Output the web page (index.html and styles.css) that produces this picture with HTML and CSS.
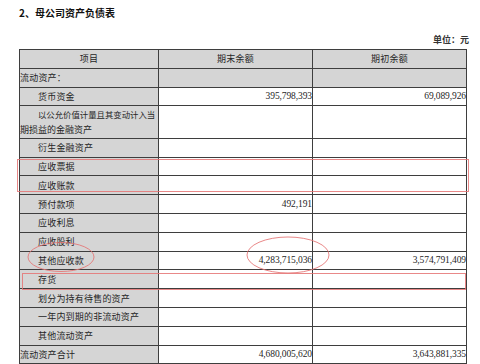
FILE: index.html
```html
<!DOCTYPE html>
<html lang="zh-CN">
<head>
<meta charset="utf-8">
<title>母公司资产负债表</title>
<link rel="stylesheet" href="styles.css">
</head>
<body>
<div class="page">
  <h1 class="title">2、母公司资产负债表</h1>
  <div class="unit">单位：元</div>
  <table class="sheet">
    <colgroup><col class="c1"><col class="c2"><col class="c3"></colgroup>
    <tr class="head"><td class="center">项目</td><td class="center">期末余额</td><td class="center">期初余额</td></tr>
    <tr class="group"><td>流动资产：</td><td></td><td></td></tr>
    <tr><td class="ind">货币资金</td><td class="num">395,798,393</td><td class="num">69,089,926</td></tr>
    <tr class="tall"><td class="wrap"><span class="l1">以公允价值计量且其变动计入当</span><br>期损益的金融资产</td><td></td><td></td></tr>
    <tr><td class="ind">衍生金融资产</td><td></td><td></td></tr>
    <tr><td class="ind">应收票据</td><td></td><td></td></tr>
    <tr><td class="ind">应收账款</td><td></td><td></td></tr>
    <tr><td class="ind">预付款项</td><td class="num">492,191</td><td></td></tr>
    <tr><td class="ind">应收利息</td><td></td><td></td></tr>
    <tr><td class="ind">应收股利</td><td></td><td></td></tr>
    <tr><td class="ind">其他应收款</td><td class="num">4,283,715,036</td><td class="num">3,574,791,409</td></tr>
    <tr><td class="ind">存货</td><td></td><td></td></tr>
    <tr><td class="ind">划分为持有待售的资产</td><td></td><td></td></tr>
    <tr><td class="ind">一年内到期的非流动资产</td><td></td><td></td></tr>
    <tr><td class="ind">其他流动资产</td><td></td><td></td></tr>
    <tr><td>流动资产合计</td><td class="num">4,680,005,620</td><td class="num">3,643,881,335</td></tr>
  </table>
</div>
<svg class="marks" width="480" height="364" viewBox="0 0 480 364">
  <rect x="17.5" y="159.5" width="451" height="32" class="mark"/>
  <rect x="22.5" y="273.5" width="443" height="16" class="mark"/>
  <ellipse cx="61" cy="257" rx="33" ry="14.5" class="mark"/>
  <ellipse cx="288" cy="255" rx="41" ry="18" class="mark"/>
</svg>
</body>
</html>
```
FILE: styles.css
```css
html, body {
  margin: 0;
  padding: 0;
  background: #ffffff;
}
body {
  width: 480px;
  height: 364px;
  overflow: hidden;
  position: relative;
  color: #262626;
  font-family: "Noto Sans CJK SC", "Liberation Serif", serif;
}
.page {
  padding: 6px 11px 0 19px;
}
.title {
  margin: 0;
  font-size: 10px;
  line-height: 13px;
  font-weight: bold;
  color: #111;
}
.unit {
  margin-top: 14px;
  font-size: 9px;
  line-height: 14px;
  text-align: right;
  font-weight: bold;
  color: #333;
}
.sheet {
  margin-top: 2px;
  width: 447px;
  table-layout: fixed;
  border-collapse: collapse;
  font-size: 9px;
  letter-spacing: 0.2px;
}
.c1 { width: 139px; }
.c2 { width: 154px; }
.c3 { width: 154px; }
.sheet td {
  border: 1px solid #3e3e3e;
  height: 17.8px;
  padding: 0;
  line-height: 11px;
  vertical-align: middle;
  white-space: nowrap;
  overflow: hidden;
}
.sheet td:first-child {
  background: #d5d5d5;
}
.sheet tr.head td,
.sheet tr.group td {
  background: #d5d5d5;
}
.sheet tr.tall td {
  height: 31.5px;
}
.sheet td.center { text-align: center; }
.sheet td.ind { padding-left: 18px; }
.sheet td.wrap {
  line-height: 15px;
  padding-left: 0;
  letter-spacing: 0;
  overflow: visible;
}
.l1 {
  display: inline-block;
  margin-left: 18px;
  font-size: 8.4px;
  letter-spacing: 0;
}
.sheet td.num {
  text-align: right;
  font-family: "Liberation Serif", serif;
  font-size: 9.5px;
  letter-spacing: -0.1px;
}
.marks {
  position: absolute;
  left: 0;
  top: 0;
  pointer-events: none;
}
.mark {
  fill: none;
  stroke: #e57373;
  stroke-width: 1;
  opacity: 0.85;
}
```
